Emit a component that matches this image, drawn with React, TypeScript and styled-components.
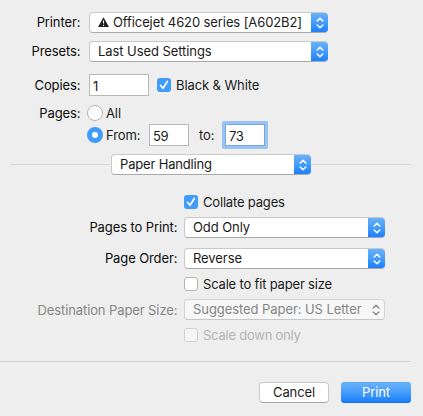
import React from 'react';
import styled, { createGlobalStyle, css } from 'styled-components';

const GlobalStyle = createGlobalStyle`
  * { box-sizing: border-box; }
  body {
    margin: 0;
    background: #eeeeee;
    color: #1a1a1a;
    font: 13px/16px Inter, "Liberation Sans", sans-serif;
    letter-spacing: -0.1px;
  }
`;

const blueFill = css`
  background: linear-gradient(#6cb3fa 0%, #4a9ffa 45%, #167dfc 100%);
`;

const Dialog = styled.main`
  width: 423px;
  height: 416px;
  display: flex;
  flex-direction: column;
  background: #eeeeee;
  white-space: nowrap;
  overflow: hidden;
`;

const Row = styled.div<{ $label: number; $top: number; $h?: number }>`
  display: grid;
  grid-template-columns: ${p => p.$label}px auto;
  align-items: center;
  flex: none;
  height: ${p => p.$h ?? 21}px;
  margin-top: ${p => p.$top}px;
`;

const Label = styled.span<{ $disabled?: boolean; $lift?: number }>`
  grid-column: 1;
  text-align: right;
  padding-right: 0.6px;
  padding-bottom: ${p => p.$lift ?? 1}px;
  color: ${p => (p.$disabled ? '#858585' : '#0c0c0c')};
`;

const Controls = styled.div<{ $indent: number }>`
  grid-column: 2;
  display: flex;
  align-items: center;
  padding-left: ${p => p.$indent}px;
`;

const PopUp = styled.div<{ $width: number; $disabled?: boolean; $spacing?: number }>`
  display: flex;
  flex: none;
  width: ${p => p.$width}px;
  height: 21px;
  overflow: hidden;
  border: 1px solid ${p => (p.$disabled ? '#d4d4d4' : '#c9c9c9')};
  border-bottom-color: ${p => (p.$disabled ? '#c6c6c6' : '#a9a9a9')};
  border-right-width: ${p => (p.$disabled ? 1 : 0)}px;
  border-radius: 4px;
  background: ${p => (p.$disabled ? '#f7f7f7' : '#fff')};
  color: ${p => (p.$disabled ? '#858585' : '#1a1a1a')};
  letter-spacing: ${p => p.$spacing ?? -0.07}px;
`;

const PopUpText = styled.span`
  display: flex;
  align-items: center;
  flex: 1;
  gap: 4px;
  height: 18px;
  padding-left: 8px;
`;

const PopUpKnob = styled.span<{ $disabled?: boolean }>`
  display: flex;
  align-items: center;
  justify-content: center;
  flex: none;
  width: 17px;
  height: 21px;
  margin-top: -1px;
  ${p => !p.$disabled && css`
    ${blueFill}
    border-radius: 0 4px 4px 0;
    box-shadow: inset 0 -1px #176ff0;
  `}
`;

const Field = styled.div<{ $width: number; $focused?: boolean }>`
  flex: none;
  width: ${p => p.$width}px;
  height: 22px;
  padding: 3px 0 0 3px;
  border: 1px solid ${p => (p.$focused ? '#7aa7d9' : '#b9b9b9')};
  background: #fff;
  color: #1a1a1a;
  letter-spacing: -0.3px;
  ${p => p.$focused && css`
    box-shadow: 0 0 0 3px #9ac3f3;
    border-radius: 0.5px;
  `}
`;

const Box = styled.span<{ $checked?: boolean; $disabled?: boolean }>`
  display: flex;
  align-items: center;
  justify-content: center;
  flex: none;
  width: 14px;
  height: 14px;
  border-radius: 3px;
  border: 1px solid ${p => (p.$disabled ? '#cfcfcf' : '#b4b4b4')};
  background: ${p => (p.$disabled ? '#f6f6f6' : '#fff')};
  ${p => p.$checked && css`
    border: 0;
    background: #419bf9;
  `}
`;

const CheckLabel = styled.div<{ $disabled?: boolean; $indent?: number; $spacing?: number }>`
  display: flex;
  align-items: center;
  gap: 5px;
  height: 14px;
  margin-left: ${p => p.$indent ?? 0}px;
  color: ${p => (p.$disabled ? '#b4b4b4' : '#1a1a1a')};
  letter-spacing: ${p => p.$spacing ?? -0.18}px;
`;

const RadioDot = styled.span<{ $on?: boolean }>`
  flex: none;
  width: 16px;
  height: 16px;
  margin-left: -2px;
  border-radius: 50%;
  border: ${p => (p.$on ? '5px solid #419bf9' : '1px solid #b2b2b2')};
  background: #fff;
`;

const RadioText = styled.span<{ $width?: number }>`
  width: ${p => (p.$width ? `${p.$width}px` : 'auto')};
  padding-left: 3px;
`;

const ToText = styled.span`
  width: 36px;
  padding-left: 10px;
`;

const Section = styled.div`
  display: flex;
  align-items: center;
  flex: none;
  gap: 1px;
  height: 21px;
  margin: 8px 12px 0 11px;
`;

const Rule = styled.span<{ $width?: number }>`
  flex: ${p => (p.$width ? 'none' : 1)};
  width: ${p => (p.$width ? `${p.$width}px` : 'auto')};
  height: 1px;
  background: #d4d4d4;
`;

const Divider = styled.hr`
  flex: none;
  width: 411px;
  height: 1px;
  margin: 19px 0 0;
  border: 0;
  background: #d2d2d2;
`;

const Footer = styled.footer`
  display: flex;
  justify-content: flex-end;
  flex: none;
  gap: 12px;
  margin: 20px 12px 0 0;
`;

const Button = styled.button<{ $primary?: boolean }>`
  width: 70px;
  height: 21px;
  padding: 0 0 2px;
  border: 1px solid #c9c9c9;
  border-bottom-color: #a9a9a9;
  border-radius: 4px;
  background: #fff;
  color: #1a1a1a;
  font: inherit;
  letter-spacing: inherit;
  ${p => p.$primary && css`
    ${blueFill}
    border: 0;
    box-shadow: inset 0 1px #60a9f6, inset 0 -1px #176ff0;
    color: #fff;
  `}
`;

const Arrows = ({ color = '#fff' }: { color?: string }) => (
  <svg width="8" height="12" viewBox="0 0 8 12" fill="none" stroke={color} strokeWidth="1.5" strokeLinecap="round" strokeLinejoin="round">
    <path d="M1.2 4 4 1.2 6.8 4M1.2 8 4 10.8 6.8 8" />
  </svg>
);

const Warning = () => (
  <svg width="11" height="10" viewBox="0 0 11 10">
    <path d="M5.5.2 11 10H0Z" fill="#222" />
    <path d="M5.5 3.4v3.2M5.5 7.7v1.2" stroke="#fff" strokeWidth="1.1" />
  </svg>
);

type SelectProps = { width: number; disabled?: boolean; spacing?: number; children: React.ReactNode };
const Select = ({ width, disabled, spacing, children }: SelectProps) => (
  <PopUp $width={width} $disabled={disabled} $spacing={spacing}>
    <PopUpText>{children}</PopUpText>
    <PopUpKnob $disabled={disabled}><Arrows color={disabled ? '#8d8d8d' : '#fff'} /></PopUpKnob>
  </PopUp>
);

type CheckProps = { checked?: boolean; disabled?: boolean; indent?: number; spacing?: number; children: React.ReactNode };
const Checkbox = ({ checked, disabled, indent, spacing, children }: CheckProps) => (
  <CheckLabel $disabled={disabled} $indent={indent} $spacing={spacing}>
    <Box $checked={checked} $disabled={disabled}>
      {checked && (
        <svg width="14" height="14" viewBox="0 0 14 14" fill="none" stroke="#fff" strokeWidth="1.7" strokeLinecap="round" strokeLinejoin="round">
          <path d="M3.6 7.5 6 10.3 10.3 3.5" />
        </svg>
      )}
    </Box>
    <span>{children}</span>
  </CheckLabel>
);

export default function App() {
  return (
    <>
      <GlobalStyle />
      <Dialog>
        <Row $label={81} $top={12}>
          <Label>Printer:</Label>
          <Controls $indent={8}><Select width={239} spacing={-0.1}><Warning /><span>Officejet 4620 series [A602B2]</span></Select></Controls>
        </Row>
        <Row $label={81} $top={8}>
          <Label>Presets:</Label>
          <Controls $indent={8}><Select width={239}>Last Used Settings</Select></Controls>
        </Row>
        <Row $label={81} $top={12} $h={22}>
          <Label $lift={0}>Copies:</Label>
          <Controls $indent={8}>
            <Field $width={60}>1</Field>
            <Checkbox checked indent={8} spacing={-0.1}>Black &amp; White</Checkbox>
          </Controls>
        </Row>
        <Row $label={81} $top={9} $h={16}>
          <Label $lift={0}>Pages:</Label>
          <Controls $indent={8}><RadioDot /><RadioText>All</RadioText></Controls>
        </Row>
        <Row $label={81} $top={3} $h={22}>
          <Controls $indent={8}>
            <RadioDot $on />
            <RadioText $width={46}>From:</RadioText>
            <Field $width={40}>59</Field>
            <ToText>to:</ToText>
            <Field $width={40} $focused>73</Field>
          </Controls>
        </Row>
        <Section>
          <Rule $width={99} />
          <Select width={200} spacing={-0.17}>Paper Handling</Select>
          <Rule />
        </Section>
        <Row $label={178} $top={20} $h={14}>
          <Controls $indent={6}><Checkbox checked>Collate pages</Checkbox></Controls>
        </Row>
        <Row $label={178} $top={8}>
          <Label>Pages to Print:</Label>
          <Controls $indent={6}><Select width={201}>Odd Only</Select></Controls>
        </Row>
        <Row $label={178} $top={10}>
          <Label>Page Order:</Label>
          <Controls $indent={6}><Select width={201}>Reverse</Select></Controls>
        </Row>
        <Row $label={178} $top={8} $h={14}>
          <Controls $indent={6}><Checkbox>Scale to fit paper size</Checkbox></Controls>
        </Row>
        <Row $label={178} $top={8}>
          <Label $disabled $lift={0}>Destination Paper Size:</Label>
          <Controls $indent={6}><Select width={201} disabled>Suggested Paper: US Letter</Select></Controls>
        </Row>
        <Row $label={178} $top={8} $h={14}>
          <Controls $indent={6}><Checkbox disabled spacing={-0.23}>Scale down only</Checkbox></Controls>
        </Row>
        <Divider />
        <Footer>
          <Button>Cancel</Button>
          <Button $primary>Print</Button>
        </Footer>
      </Dialog>
    </>
  );
}
